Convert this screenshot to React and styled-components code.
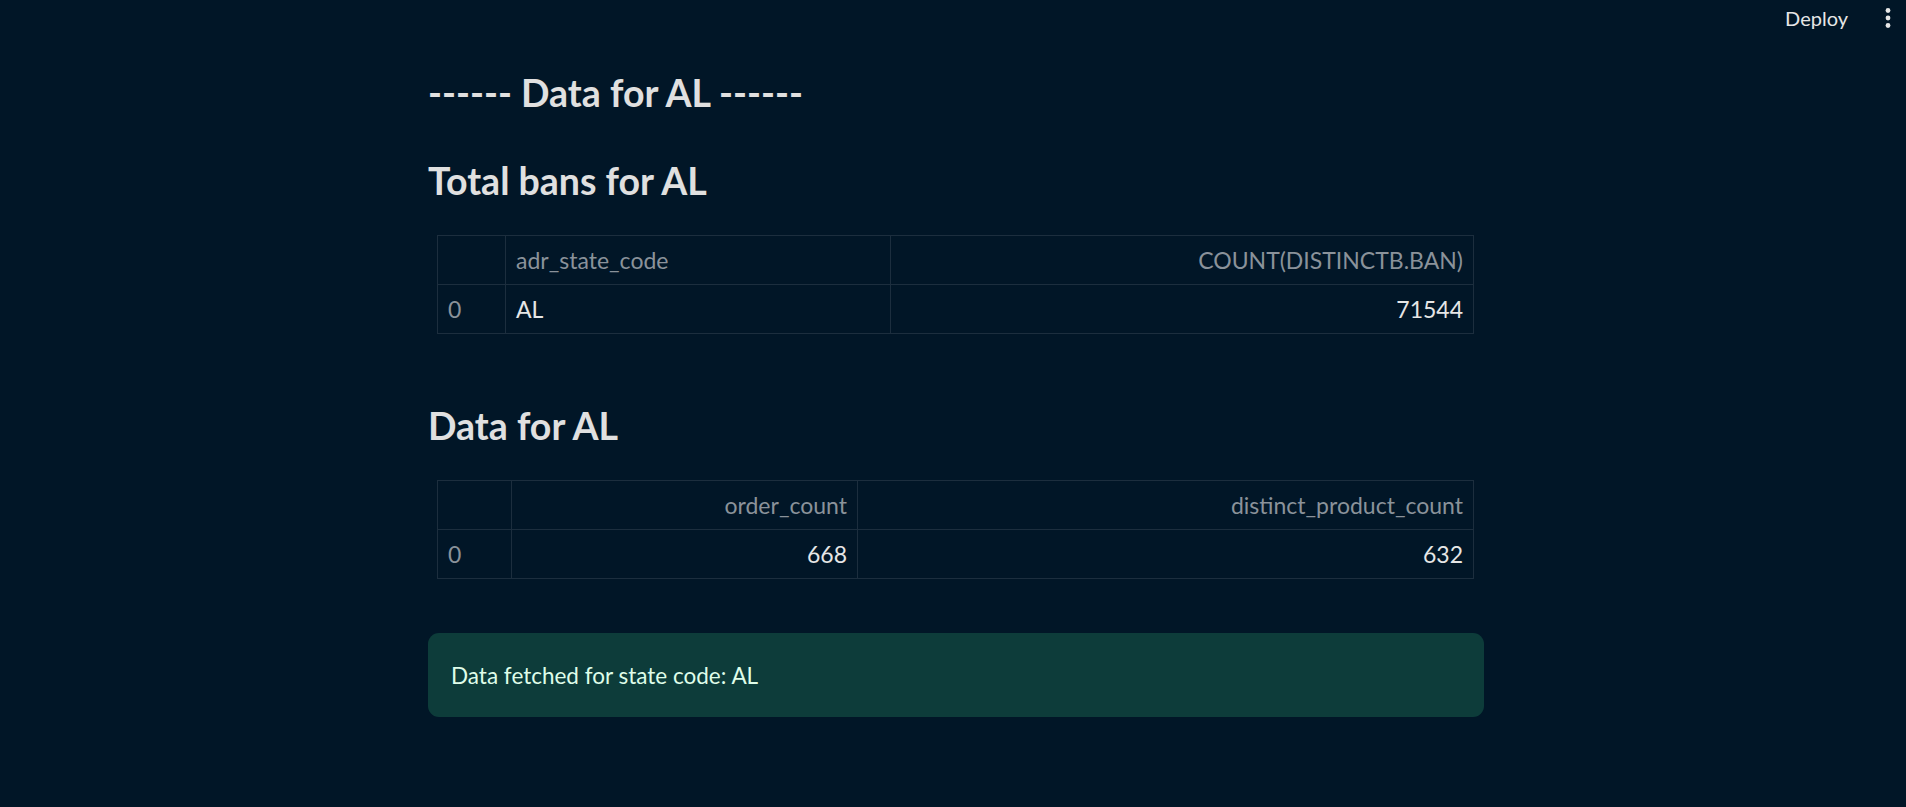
import React from "react";
import styled, { createGlobalStyle } from "styled-components";

const GlobalStyle = createGlobalStyle`
  html, body {
    margin: 0;
    padding: 0;
    background: #011627;
  }
  body {
    font-family: "Lato", "Noto Sans", sans-serif;
    color: #e0e0e0;
  }
`;

const banColumns = [68, 385, 583];
const dataColumns = [74, 346, 616];

function App() {
  return (
    <Page>
      <GlobalStyle />
      <Header>
        <DeployButton>Deploy</DeployButton>
        <MenuButton>
          <svg width="8" height="24" viewBox="0 0 8 24">
            <circle cx="4" cy="4.5" r="2.4" fill="#e6e6e6" />
            <circle cx="4" cy="12" r="2.4" fill="#e6e6e6" />
            <circle cx="4" cy="19.5" r="2.4" fill="#e6e6e6" />
          </svg>
        </MenuButton>
      </Header>

      <Main>
        <Heading>------ Data for AL ------</Heading>

        <Heading second>Total bans for AL</Heading>
        <GridWrap>
          <Grid>
            <colgroup>
              {banColumns.map((w, i) => (
                <col key={i} style={{ width: w }} />
              ))}
            </colgroup>
            <thead>
              <tr>
                <HeadCell />
                <HeadCell>adr_state_code</HeadCell>
                <HeadCell right>COUNT(DISTINCTB.BAN)</HeadCell>
              </tr>
            </thead>
            <tbody>
              <tr>
                <IndexCell>0</IndexCell>
                <Cell>AL</Cell>
                <Cell right>71544</Cell>
              </tr>
            </tbody>
          </Grid>
        </GridWrap>

        <Heading third>Data for AL</Heading>
        <GridWrap>
          <Grid>
            <colgroup>
              {dataColumns.map((w, i) => (
                <col key={i} style={{ width: w }} />
              ))}
            </colgroup>
            <thead>
              <tr>
                <HeadCell />
                <HeadCell right>order_count</HeadCell>
                <HeadCell right>distinct_product_count</HeadCell>
              </tr>
            </thead>
            <tbody>
              <tr>
                <IndexCell>0</IndexCell>
                <Cell right>668</Cell>
                <Cell right>632</Cell>
              </tr>
            </tbody>
          </Grid>
        </GridWrap>

        <SuccessBox>Data fetched for state code: AL</SuccessBox>
      </Main>
    </Page>
  );
}

export default App;

const Page = styled.div`
  min-height: 100vh;
  background: #011627;
`;

const Header = styled.header`
  display: flex;
  justify-content: flex-end;
  align-items: center;
  height: 36px;
  padding-right: 14px;
  gap: 36px;
`;

const DeployButton = styled.span`
  font-size: 20px;
  color: #e6e6e6;
`;

const MenuButton = styled.span`
  display: flex;
  align-items: center;
`;

const Main = styled.main`
  width: 1056px;
  margin-left: 428px;
  padding-top: 35px;
  padding-bottom: 80px;
`;

const Heading = styled.h2`
  margin: ${(p) => (p.second ? "44px 0 0" : p.third ? "70px 0 0" : "0")};
  font-size: 37.5px;
  font-weight: 700;
  line-height: 44px;
  color: #e0e0e0;
`;

const GridWrap = styled.div`
  margin: 32px 11px 0 9px;
`;

const Grid = styled.table`
  width: 100%;
  table-layout: fixed;
  border-collapse: collapse;
  border: 1px solid #1c2e3e;
  font-size: 23px;
`;

const HeadCell = styled.th`
  height: 48px;
  padding: 0 10px;
  border: 1px solid #1c2e3e;
  font-weight: 400;
  color: #8a929a;
  text-align: ${(p) => (p.right ? "right" : "left")};
  white-space: nowrap;
`;

const Cell = styled.td`
  height: 48px;
  padding: 0 10px;
  border: 1px solid #1c2e3e;
  color: #e6e6e6;
  text-align: ${(p) => (p.right ? "right" : "left")};
`;

const IndexCell = styled(Cell)`
  color: #8a929a;
`;

const SuccessBox = styled.div`
  margin-top: 54px;
  height: 84px;
  display: flex;
  align-items: center;
  padding: 0 23px;
  box-sizing: border-box;
  border-radius: 11px;
  background: #0d3c3a;
  color: #dffde9;
  font-size: 22.5px;
`;
